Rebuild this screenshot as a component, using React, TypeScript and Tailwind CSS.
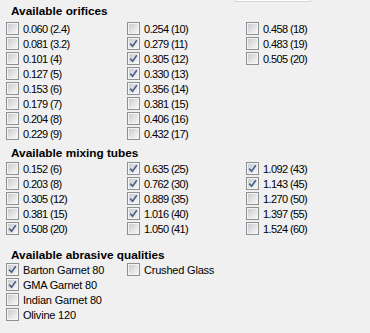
import React from 'react'

type Item = { label: string; checked?: boolean; numeric?: boolean }

const orifices: Item[] = [
  { label: '0.060 (2.4)' },
  { label: '0.081 (3.2)' },
  { label: '0.101 (4)' },
  { label: '0.127 (5)' },
  { label: '0.153 (6)' },
  { label: '0.179 (7)' },
  { label: '0.204 (8)' },
  { label: '0.229 (9)' },
  { label: '0.254 (10)' },
  { label: '0.279 (11)', checked: true },
  { label: '0.305 (12)', checked: true },
  { label: '0.330 (13)', checked: true },
  { label: '0.356 (14)', checked: true },
  { label: '0.381 (15)' },
  { label: '0.406 (16)' },
  { label: '0.432 (17)' },
  { label: '0.458 (18)' },
  { label: '0.483 (19)' },
  { label: '0.505 (20)' },
].map((i) => ({ ...i, numeric: true }))

const tubes: Item[] = [
  { label: '0.152 (6)' },
  { label: '0.203 (8)' },
  { label: '0.305 (12)' },
  { label: '0.381 (15)' },
  { label: '0.508 (20)', checked: true },
  { label: '0.635 (25)', checked: true },
  { label: '0.762 (30)', checked: true },
  { label: '0.889 (35)', checked: true },
  { label: '1.016 (40)', checked: true },
  { label: '1.050 (41)' },
  { label: '1.092 (43)', checked: true },
  { label: '1.143 (45)', checked: true },
  { label: '1.270 (50)' },
  { label: '1.397 (55)' },
  { label: '1.524 (60)' },
].map((i) => ({ ...i, numeric: true }))

const abrasives: Item[] = [
  { label: 'Barton Garnet 80', checked: true },
  { label: 'GMA Garnet 80', checked: true },
  { label: 'Indian Garnet 80' },
  { label: 'Olivine 120' },
  { label: 'Crushed Glass' },
]

function Box({ checked }: { checked?: boolean }) {
  return (
    <span className="w-[13px] h-[13px] shrink-0 border border-[#8e8f8f] bg-[#f4f4f4] p-px">
      <span className="relative block w-full h-full bg-gradient-to-br from-[#c9ccd1] to-[#f7f7f7]">
        {checked && (
          <svg viewBox="0 0 9 9" className="absolute inset-0 w-full h-full">
            <path d="M1.2 4.6 L3.6 7.2 L7.8 1.2" fill="none" stroke="#4a5e8c" strokeWidth="1.6" />
          </svg>
        )}
      </span>
    </span>
  )
}

function Section({
  title,
  items,
  rows,
  className,
  gridClassName,
}: {
  title: string
  items: Item[]
  rows: string
  className: string
  gridClassName: string
}) {
  return (
    <div className={className}>
      <div className="h-[15px] leading-[15px] pl-[11px] text-[11.8px] font-bold text-black">{title}</div>
      <div className={`grid grid-flow-col grid-cols-[121px_119px_1fr] pl-[6px] ${rows} ${gridClassName}`}>
        {items.map((it) => (
          <div key={it.label} className="flex items-start h-[15px]">
            <Box checked={it.checked} />
            <span
              className={`ml-[4px] leading-[15px] text-[11px] text-black whitespace-nowrap ${
                it.numeric ? 'tracking-[-0.6px]' : 'tracking-[-0.2px]'
              }`}
            >
              {it.label}
            </span>
          </div>
        ))}
      </div>
    </div>
  )
}

export default function App() {
  return (
    <div className="w-[370px] h-[333px] bg-[#f0f0f0] overflow-hidden" style={{ fontFamily: '"Liberation Sans", Arial, sans-serif' }}>
      <div className="ml-[235px] w-[76px] h-[2px] bg-white border-b border-x border-[#d4d4d4]" />
      <Section
        title="Available orifices"
        items={orifices}
        rows="grid-rows-[repeat(8,15px)]"
        className="mt-[2px]"
        gridClassName="mt-[3px]"
      />
      <Section
        title="Available mixing tubes"
        items={tubes}
        rows="grid-rows-[repeat(5,15px)]"
        className="mt-[4px]"
        gridClassName="mt-[1px]"
      />
      <Section
        title="Available abrasive qualities"
        items={abrasives}
        rows="grid-rows-[repeat(4,15px)]"
        className="mt-[11px]"
        gridClassName=""
      />
    </div>
  )
}
